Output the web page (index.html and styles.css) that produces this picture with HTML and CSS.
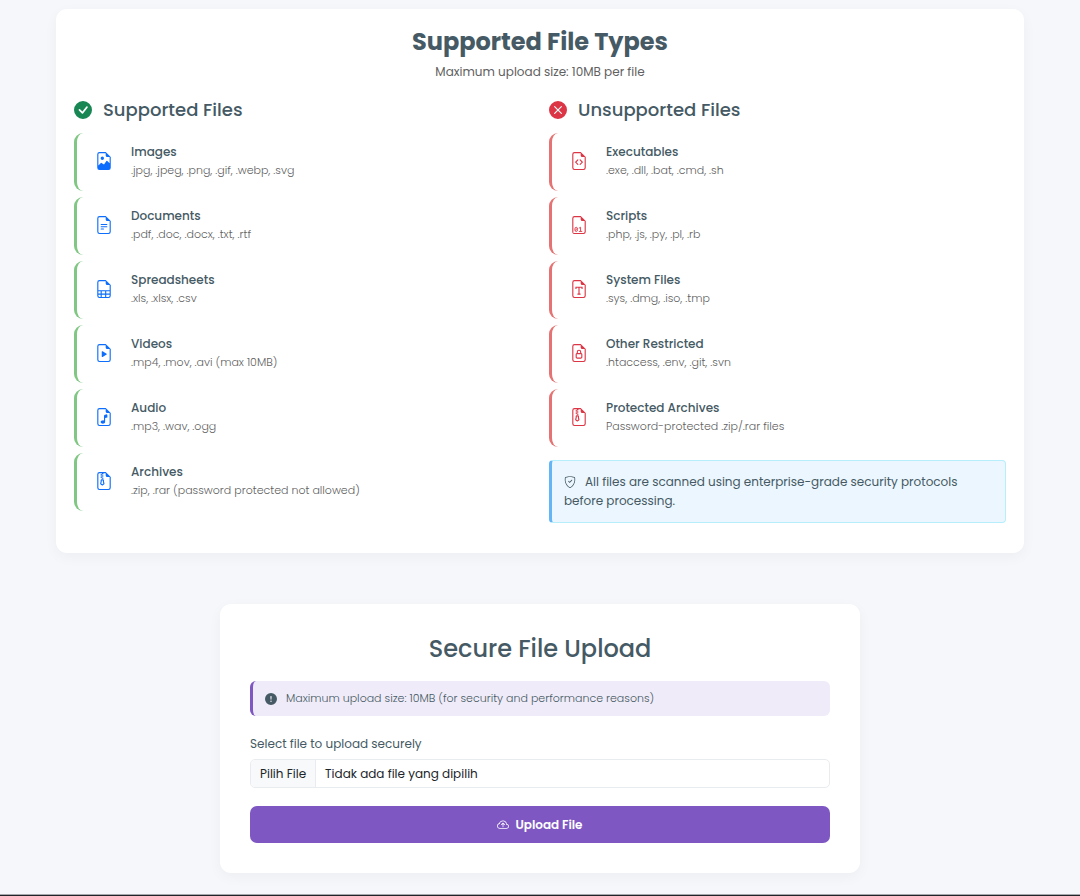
FILE: index.html
```html
<!DOCTYPE html>
<html lang="id">
<head>
<meta charset="utf-8">
<meta name="viewport" content="width=device-width, initial-scale=1">
<title>Secure File Upload</title>
<link rel="stylesheet" href="styles.css">
</head>
<body>
<svg class="sprite" aria-hidden="true">
  <symbol id="page" viewBox="0 0 16 16"><path d="M14 4.500V14a2 2 0 0 1-2 2H4a2 2 0 0 1-2-2V2a2 2 0 0 1 2-2h5.500L14 4.500zm-3 0A1.500 1.500 0 0 1 9.500 3V1H4a1 1 0 0 0-1 1v12a1 1 0 0 0 1 1h8a1 1 0 0 0 1-1V4.500h-2z"/></symbol>
  <symbol id="image" viewBox="0 0 16 16"><path d="M6.502 7a1.500 1.500 0 1 0 0-3 1.500 1.500 0 0 0 0 3z"/><path d="M14 14a2 2 0 0 1-2 2H4a2 2 0 0 1-2-2V2a2 2 0 0 1 2-2h5.500L14 4.500V14zM4 1a1 1 0 0 0-1 1v10l2.224-2.224a.5.5 0 0 1 .61-.075L8 11l2.157-3.020a.5.5 0 0 1 .76-.063L13 10V4.500h-2A1.500 1.500 0 0 1 9.500 3V1H4z"/></symbol>
  <symbol id="text" viewBox="0 0 16 16"><use href="#page"/><path d="M5.500 7a.5.5 0 0 0 0 1h5a.5.5 0 0 0 0-1h-5zM5 9.500a.5.5 0 0 1 .5-.5h5a.5.5 0 0 1 0 1h-5a.5.5 0 0 1-.5-.5zm0 2a.5.5 0 0 1 .5-.5h2a.5.5 0 0 1 0 1h-2a.5.5 0 0 1-.5-.5z"/></symbol>
  <symbol id="sheet" viewBox="0 0 16 16"><path d="M14 14V4.500L9.500 0H4a2 2 0 0 0-2 2v12a2 2 0 0 0 2 2h8a2 2 0 0 0 2-2zM9.500 3A1.500 1.500 0 0 0 11 4.500h2V9H3V2a1 1 0 0 1 1-1h5.500v2zM3 12v-2h2v2H3zm0 1h2v2H4a1 1 0 0 1-1-1v-1zm3 2v-2h3v2H6zm4 0v-2h3v1a1 1 0 0 1-1 1h-2zm3-3h-3v-2h3v2zm-7 0v-2h3v2H6z"/></symbol>
  <symbol id="play" viewBox="0 0 16 16"><use href="#page"/><path d="M6 6.883v4.234a.5.5 0 0 0 .757.429l3.528-2.117a.5.5 0 0 0 0-.858L6.757 6.454a.5.5 0 0 0-.757.43z"/></symbol>
  <symbol id="music" viewBox="0 0 16 16"><use href="#page"/><path d="M11 6.640a1 1 0 0 0-1.243-.97l-1 .25A1 1 0 0 0 8 6.890v4.306A2.572 2.572 0 0 0 7 11c-.5 0-.974.134-1.338.377-.36.24-.662.628-.662 1.123s.301.883.662 1.123c.364.243.839.377 1.338.377.5 0 .974-.134 1.338-.377.36-.24.662-.628.662-1.123V8.890l2-.5V6.640z"/></symbol>
  <symbol id="zip" viewBox="0 0 16 16"><path d="M5 7.500a1 1 0 0 1 1-1h1a1 1 0 0 1 1 1v.938l.4 1.599a1 1 0 0 1-.416 1.074l-.93.62a1 1 0 0 1-1.110 0l-.929-.62a1 1 0 0 1-.415-1.074L5 8.438V7.500zm2 0H6v.938a1 1 0 0 1-.03.243l-.4 1.598.93.62.929-.62-.4-1.598A1 1 0 0 1 7 8.438V7.500z"/><path d="M14 4.500V14a2 2 0 0 1-2 2H4a2 2 0 0 1-2-2V2a2 2 0 0 1 2-2h5.500L14 4.500zm-3 0A1.500 1.500 0 0 1 9.500 3V1h-2v1h-1v1h1v1h-1v1h1v1H6V5H5V4h1V3H5V2h1V1H4a1 1 0 0 0-1 1v12a1 1 0 0 0 1 1h8a1 1 0 0 0 1-1V4.500h-2z"/></symbol>
  <symbol id="code" viewBox="0 0 16 16"><use href="#page"/><path d="M8.646 6.646a.5.5 0 0 1 .708 0l2 2a.5.5 0 0 1 0 .708l-2 2a.5.5 0 0 1-.708-.708L10.293 9 8.646 7.354a.5.5 0 0 1 0-.708zm-1.292 0a.5.5 0 0 0-.708 0l-2 2a.5.5 0 0 0 0 .708l2 2a.5.5 0 0 0 .708-.708L5.707 9l1.647-1.646a.5.5 0 0 0 0-.708z"/></symbol>
  <symbol id="binary" viewBox="0 0 16 16"><path d="M14 14V4.500L9.500 0H4a2 2 0 0 0-2 2v12a2 2 0 0 0 1 1.732V2a1 1 0 0 1 1-1h5.500v2A1.500 1.500 0 0 0 11 4.500h2V14a1 1 0 0 1-1 1H3v.732A2 2 0 0 0 4 16h8a2 2 0 0 0 2-2z"/><g fill="none" stroke="currentColor" stroke-width=".8"><ellipse cx="5.500" cy="11.900" rx="1.200" ry="1.900"/><path d="M4.600 12.700 6.400 11.200M7.900 10.900l1.500-.9v3.700M7.900 13.700h3"/></g></symbol>
  <symbol id="serif" viewBox="0 0 16 16"><use href="#page"/><path fill="none" stroke="currentColor" d="M5.300 8V6.400h5.400V8M8 6.400v6.200M6.600 12.600h2.800"/></symbol>
  <symbol id="lock" viewBox="0 0 16 16"><use href="#page"/><path d="M10 7v1.076c.54.166 1 .597 1 1.224v2.400c0 .816-.781 1.300-1.500 1.300h-3c-.719 0-1.500-.484-1.500-1.300V9.300c0-.627.46-1.058 1-1.224V7a2 2 0 1 1 4 0zM7 7v1h2V7a1 1 0 0 0-2 0zM6 9.300v2.400c0 .042.02.107.105.175A.637.637 0 0 0 6.500 12h3a.64.64 0 0 0 .395-.125c.085-.068.105-.133.105-.175V9.300c0-.042-.02-.107-.105-.175A.637.637 0 0 0 9.500 9h-3a.637.637 0 0 0-.395.125C6.020 9.193 6 9.258 6 9.300z"/></symbol>
  <symbol id="check" viewBox="0 0 16 16"><path d="M16 8A8 8 0 1 1 0 8a8 8 0 0 1 16 0zm-3.970-3.030a.75.75 0 0 0-1.080.022L7.477 9.417 5.384 7.323a.75.75 0 0 0-1.060 1.060L6.970 11.030a.75.75 0 0 0 1.079-.02l3.992-4.990a.75.75 0 0 0-.01-1.050z"/></symbol>
  <symbol id="cross" viewBox="0 0 16 16"><path d="M16 8A8 8 0 1 1 0 8a8 8 0 0 1 16 0zM5.354 4.646a.5.5 0 1 0-.708.708L7.293 8l-2.647 2.646a.5.5 0 0 0 .708.708L8 8.707l2.646 2.647a.5.5 0 0 0 .708-.708L8.707 8l2.647-2.646a.5.5 0 0 0-.708-.708L8 7.293 5.354 4.646z"/></symbol>
  <symbol id="alert" viewBox="0 0 16 16"><path d="M16 8A8 8 0 1 1 0 8a8 8 0 0 1 16 0zM8 4a.905.905 0 0 0-.9.995l.35 3.507a.552.552 0 0 0 1.100 0l.35-3.507A.905.905 0 0 0 8 4zm.002 6a1 1 0 1 0 0 2 1 1 0 0 0 0-2z"/></symbol>
  <symbol id="shield" viewBox="0 0 16 16"><path d="M5.338 1.590a61.440 61.440 0 0 0-2.837.856.481.481 0 0 0-.328.39c-.554 4.157.726 7.190 2.253 9.188a10.725 10.725 0 0 0 2.287 2.233c.346.244.652.42.893.533.12.057.218.095.293.118a.55.55 0 0 0 .101.025.615.615 0 0 0 .1-.025c.076-.023.174-.061.294-.118.24-.113.547-.29.893-.533a10.726 10.726 0 0 0 2.287-2.233c1.527-1.997 2.807-5.031 2.253-9.188a.48.48 0 0 0-.328-.39c-.651-.213-1.750-.56-2.837-.855C9.552 1.290 8.531 1.067 8 1.067c-.53 0-1.552.223-2.662.524zM5.072.56C6.157.265 7.310 0 8 0s1.843.265 2.928.56c1.110.3 2.229.655 2.887.87a1.540 1.540 0 0 1 1.044 1.262c.596 4.477-.787 7.795-2.465 9.990a11.775 11.775 0 0 1-2.517 2.453 7.159 7.159 0 0 1-1.048.625c-.28.132-.581.24-.829.24s-.548-.108-.829-.24a7.158 7.158 0 0 1-1.048-.625 11.777 11.777 0 0 1-2.517-2.453C1.928 10.487.545 7.169 1.141 2.692A1.540 1.540 0 0 1 2.185 1.430 62.456 62.456 0 0 1 5.072.56z"/><path d="M10.854 5.146a.5.5 0 0 1 0 .708l-3 3a.5.5 0 0 1-.708 0l-1.500-1.500a.5.5 0 1 1 .708-.708L7.500 7.793l2.646-2.647a.5.5 0 0 1 .708 0z"/></symbol>
  <symbol id="cloud" viewBox="0 0 16 16"><path d="M7.646 5.146a.5.5 0 0 1 .708 0l2 2a.5.5 0 0 1-.708.708L8.500 6.707V10.500a.5.5 0 0 1-1 0V6.707L6.354 7.854a.5.5 0 1 1-.708-.708l2-2z"/><path d="M4.406 3.342A5.530 5.530 0 0 1 8 2c2.690 0 4.923 2 5.166 4.579C14.758 6.804 16 8.137 16 9.773 16 11.569 14.502 13 12.687 13H3.781C1.708 13 0 11.366 0 9.318c0-1.763 1.266-3.223 2.942-3.593.143-.863.698-1.723 1.464-2.383zm.653.757c-.757.653-1.153 1.440-1.153 2.056v.448l-.445.049C2.064 6.805 1 7.952 1 9.318 1 10.785 2.230 12 3.781 12h8.906C13.980 12 15 10.988 15 9.773c0-1.216-1.020-2.228-2.313-2.228h-.5v-.5C12.188 4.825 10.328 3 8 3a4.530 4.530 0 0 0-2.941 1.100z"/></symbol>
</svg>

<main class="page">
  <section class="card types">
    <header class="types-head">
      <h1>Supported File Types</h1>
      <p>Maximum upload size: 10MB per file</p>
    </header>
    <div class="columns">
      <section>
        <h2><svg class="icon green"><use href="#check"/></svg>Supported Files</h2>
        <ul class="list allowed">
          <li><svg class="icon"><use href="#image"/></svg><div><h3>Images</h3><p>.jpg, .jpeg, .png, .gif, .webp, .svg</p></div></li>
          <li><svg class="icon"><use href="#text"/></svg><div><h3>Documents</h3><p>.pdf, .doc, .docx, .txt, .rtf</p></div></li>
          <li><svg class="icon"><use href="#sheet"/></svg><div><h3>Spreadsheets</h3><p>.xls, .xlsx, .csv</p></div></li>
          <li><svg class="icon"><use href="#play"/></svg><div><h3>Videos</h3><p>.mp4, .mov, .avi (max 10MB)</p></div></li>
          <li><svg class="icon"><use href="#music"/></svg><div><h3>Audio</h3><p>.mp3, .wav, .ogg</p></div></li>
          <li><svg class="icon"><use href="#zip"/></svg><div><h3>Archives</h3><p>.zip, .rar (password protected not allowed)</p></div></li>
        </ul>
      </section>
      <section>
        <h2><svg class="icon red"><use href="#cross"/></svg>Unsupported Files</h2>
        <ul class="list denied">
          <li><svg class="icon"><use href="#code"/></svg><div><h3>Executables</h3><p>.exe, .dll, .bat, .cmd, .sh</p></div></li>
          <li><svg class="icon"><use href="#binary"/></svg><div><h3>Scripts</h3><p>.php, .js, .py, .pl, .rb</p></div></li>
          <li><svg class="icon"><use href="#serif"/></svg><div><h3>System Files</h3><p>.sys, .dmg, .iso, .tmp</p></div></li>
          <li><svg class="icon"><use href="#lock"/></svg><div><h3>Other Restricted</h3><p>.htaccess, .env, .git, .svn</p></div></li>
          <li><svg class="icon"><use href="#zip"/></svg><div><h3>Protected Archives</h3><p>Password-protected .zip/.rar files</p></div></li>
        </ul>
        <p class="notice"><svg class="icon small"><use href="#shield"/></svg>All files are scanned using enterprise-grade security protocols before processing.</p>
      </section>
    </div>
  </section>

  <section class="card upload">
    <h2>Secure File Upload</h2>
    <p class="limit"><svg class="icon small"><use href="#alert"/></svg>Maximum upload size: 10MB (for security and performance reasons)</p>
    <form>
      <label class="caption" for="file">Select file to upload securely</label>
      <input class="hidden-input" type="file" id="file" name="file">
      <label class="picker" for="file"><span class="pick">Pilih File</span><span class="chosen">Tidak ada file yang dipilih</span></label>
      <button type="submit"><svg class="icon small"><use href="#cloud"/></svg>Upload File</button>
    </form>
  </section>
</main>
<footer class="footer"></footer>
</body>
</html>
```

FILE: styles.css
```css
* { box-sizing: border-box; }
body {
  margin: 0;
  min-height: 100vh;
  display: flex;
  flex-direction: column;
  background: #f5f7fb;
  color: #455a64;
  font-family: Poppins, Inter, sans-serif;
  font-size: 12px;
  line-height: 19px;
  font-weight: 400;
}
h1, h2, h3, p, ul { margin: 0; padding: 0; }
.sprite { position: absolute; width: 0; height: 0; }
.icon { width: 18px; height: 18px; flex: none; fill: currentColor; }
.small { width: 12px; height: 12px; }
.green { color: #198754; }
.red { color: #dc3545; }

.page { padding: 9px 56px 21px; }
.card {
  background: #fff;
  border-radius: 11px;
  box-shadow: 0 4px 14px rgba(0, 0, 0, .04);
}
.types { padding: 15px 18px 30px; }
.types-head { text-align: center; }
h1 { font-size: 24px; line-height: 36px; font-weight: 700; }
.types-head p { margin-top: 2px; color: #616161; }
.columns {
  display: grid;
  grid-template-columns: 1fr 1fr;
  gap: 18px;
  margin-top: 18px;
}
.columns h2 {
  display: flex;
  align-items: center;
  gap: 11px;
  font-size: 18px;
  line-height: 22px;
  font-weight: 500;
}
.list {
  display: grid;
  gap: 6px;
  margin-top: 12px;
  list-style: none;
}
.list li {
  display: flex;
  align-items: center;
  gap: 18px;
  height: 58px;
  padding: 0 0 2px 18px;
  border-left: 3px solid;
  border-radius: 9px;
}
.allowed li { border-color: #81c784; }
.denied li { border-color: #e57373; }
.allowed .icon { color: #0d6efd; }
.denied .icon { color: #dc3545; }
h3 { font-size: 12px; line-height: 19px; font-weight: 500; }
.list p { color: #616161; font-size: 11px; font-weight: 300; }
.notice {
  margin-top: 13px;
  padding: 11px 12px 12px;
  border: 1px solid #b6effb;
  border-left: 3px solid #64b5f6;
  border-radius: 4px;
  background: #ecf6fe;
}
.notice .icon { margin-right: 9px; vertical-align: -2px; }

.upload { max-width: 640px; margin: 51px auto 0; padding: 27px 30px 30px; }
.upload h2 { text-align: center; font-size: 24px; line-height: 36px; font-weight: 500; }
.limit {
  display: flex;
  align-items: center;
  gap: 9px;
  margin-top: 14px;
  padding: 8px 12px;
  border-left: 3px solid #7e57c2;
  border-radius: 6px;
  background: #f0ebf8;
  font-size: 11px;
  font-weight: 300;
}
.caption { display: block; margin: 18px 0 6px; }
.hidden-input { position: absolute; width: 1px; height: 1px; opacity: 0; }
.picker {
  display: flex;
  border: 1px solid #e9ecef;
  border-radius: 5px;
  overflow: hidden;
  color: #212529;
  line-height: 27px;
  cursor: pointer;
}
.pick { padding: 0 9px; border-right: 1px solid #e9ecef; background: #f8f9fa; }
.chosen { padding: 0 9px; }
button {
  display: flex;
  align-items: center;
  justify-content: center;
  gap: 6px;
  width: 100%;
  margin-top: 18px;
  padding: 9px;
  border: 0;
  border-radius: 7px;
  background: #7e57c2;
  color: #fff;
  font: inherit;
  font-weight: 600;
}
.footer { margin-top: auto; height: 2px; border-top: 1px solid #a6a8ab; background: #212529; }
```
